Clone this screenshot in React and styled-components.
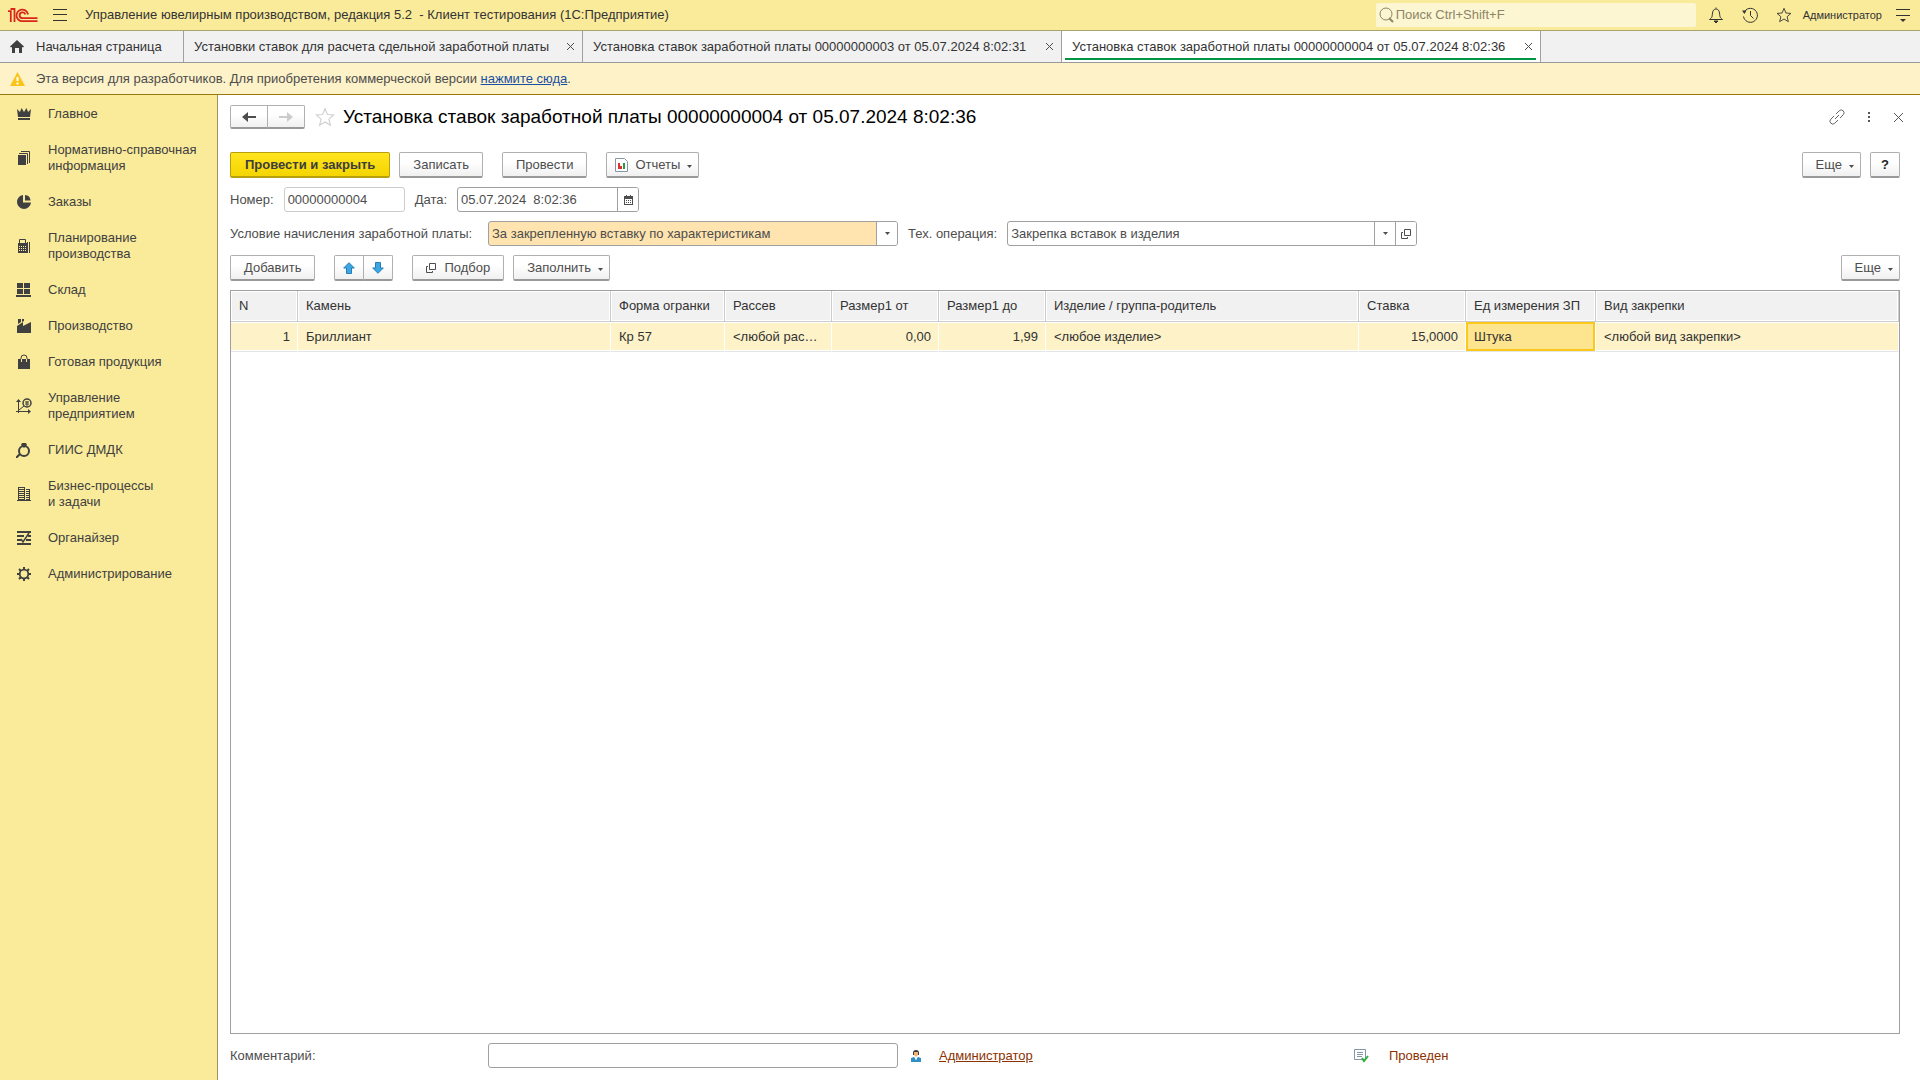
import { useState } from "react";
import styled, { createGlobalStyle, css } from "styled-components";

const GlobalStyle = createGlobalStyle`
  * { box-sizing: border-box; }

  body {
    margin: 0;
    background: #fff;
    color: #4d4d4d;
    font-family: "Liberation Sans", Arial, sans-serif;
    font-size: 13px;
    line-height: 16px;
  }

  button, input, select {
    font: inherit;
    color: inherit;
  }
`;

const sections = [
  { title: "Главное", icon: "crown" },
  { title: "Нормативно-справочная\nинформация", icon: "pages" },
  { title: "Заказы", icon: "pie" },
  { title: "Планирование\nпроизводства", icon: "calc" },
  { title: "Склад", icon: "boxes" },
  { title: "Производство", icon: "factory" },
  { title: "Готовая продукция", icon: "bag" },
  { title: "Управление\nпредприятием", icon: "axes" },
  { title: "ГИИС ДМДК", icon: "ring" },
  { title: "Бизнес-процессы\nи задачи", icon: "building" },
  { title: "Органайзер", icon: "organizer" },
  { title: "Администрирование", icon: "gear" },
];

const tabs = [
  { title: "Установки ставок для расчета сдельной заработной платы", width: 399 },
  { title: "Установка ставок заработной платы 00000000003 от 05.07.2024 8:02:31", width: 479 },
  { title: "Установка ставок заработной платы 00000000004 от 05.07.2024 8:02:36", width: 479 },
];

const columns = [
  { key: "n", title: "N", width: 67, right: true },
  { key: "stone", title: "Камень", width: 313 },
  { key: "shape", title: "Форма огранки", width: 114 },
  { key: "sieve", title: "Рассев", width: 107 },
  { key: "sizeFrom", title: "Размер1 от", width: 107, right: true },
  { key: "sizeTo", title: "Размер1 до", width: 107, right: true },
  { key: "product", title: "Изделие / группа-родитель", width: 313 },
  { key: "rate", title: "Ставка", width: 107, right: true },
  { key: "unit", title: "Ед измерения ЗП", width: 130 },
  { key: "setting", title: "Вид закрепки" },
];

const rows = [
  {
    n: "1",
    stone: "Бриллиант",
    shape: "Кр 57",
    sieve: "<любой рассев>",
    sizeFrom: "0,00",
    sizeTo: "1,99",
    product: "<любое изделие>",
    rate: "15,0000",
    unit: "Штука",
    setting: "<любой вид закрепки>",
  },
];

const sectionIcons = {
  crown: (
    <>
      <path d="M1 3l3 3 1.500-4L8 6l2.500-4L12 6l3-3-1 8H2z" />
      <path d="M2 12h12v2H2z" />
    </>
  ),
  pages: (
    <>
      <path d="M2 5h8v10H2z" />
      <path d="M3 3.500h8.500V14M5 1.500h8.500V13" fill="none" stroke="currentColor" />
    </>
  ),
  pie: (
    <>
      <path d="M7 1v7.500h8A7 7 0 1 1 7 1z" />
      <path d="M9 1a6 6 0 0 1 5.500 5.500H9z" />
    </>
  ),
  calc: (
    <>
      <path d="M3.500 6V1.500h6V6M13.500 4v11" fill="none" stroke="currentColor" />
      <path d="M2 5h9v10H2z" />
      <path d="M11.500 4v11" stroke="currentColor" />
      <path d="M3 8h1v1H3zM5 8h1v1H5zM7 8h1v1H7zM9 8h1v1H9zM3 10h1v1H3zM5 10h1v1H5zM7 10h1v1H7zM9 10h1v1H9zM3 12h1v1H3zM5 12h1v1H5zM7 12h1v1H7zM9 12h1v1H9z" fill="#faeb9b" />
    </>
  ),
  boxes: <path d="M1 1h6v5H1zM8 1h6v5H8zM1 7h6v5H1zM8 7h6v5H8zM0 13h15v2H0z" />,
  factory: <path d="M2 1h3v3l-3 2zM6 1h2v2L6 4zM1 8l6-4v4l8-4v11H1z" />,
  bag: (
    <>
      <path d="M2 5h12v10H2z" />
      <path d="M5 8V4a3 3 0 0 1 6 0v4" fill="none" stroke="currentColor" />
      <path d="M5.500 5v3M10.500 5v3" stroke="#faeb9b" />
    </>
  ),
  axes: (
    <>
      <path d="M2.500 15V2M0 13.500h14M3 12l5-4" fill="none" stroke="currentColor" />
      <path d="M0 4l2.500-3L5 4zM12 11l3 2.500-3 2.500z" />
      <circle cx="11" cy="5" r="4" fill="none" stroke="currentColor" strokeWidth="1.500" />
      <path d="M9 4h4M9 6h4M11 3v5" stroke="currentColor" />
    </>
  ),
  ring: (
    <>
      <circle cx="8" cy="9" r="5" fill="none" stroke="currentColor" strokeWidth="2" />
      <path d="M6 1h4l1 2-3 3-3-3z" />
      <path d="M4 12l-4 4" stroke="currentColor" strokeWidth="2" />
    </>
  ),
  building: (
    <>
      <path d="M2 1h7v13H2zM10 3h4v11h-4zM1 14h14v1H1z" />
      <path d="M3 2.500h5M3 4.500h5M3 6.500h5M3 8.500h5M3 10.500h5M3 12.500h5M10 4.500h3M10 6.500h3M10 8.500h3M10 10.500h3M10 12.500h3" stroke="#faeb9b" />
    </>
  ),
  organizer: (
    <>
      <path d="M1 1h14v2H1zM1 5h7v2H1zM12 5h3v2h-3zM1 9h4v2H1zM10 9h5v2h-5zM1 13h14v2H1z" />
      <path d="M5 9l2 3 6-9" fill="none" stroke="currentColor" strokeWidth="1.500" />
    </>
  ),
  gear: (
    <>
      <circle cx="8" cy="8" r="4.300" fill="none" stroke="currentColor" strokeWidth="1.800" />
      <path d="M8 1v3M8 12v3M1 8h3M12 8h3M3 3l2 2M11 11l2 2M13 3l-2 2M5 11l-2 2" stroke="currentColor" strokeWidth="2" />
    </>
  ),
};

const Caret = () => (
  <svg width="5" height="3" viewBox="0 0 5 3" aria-hidden="true">
    <path d="M0 0h5L2.500 3z" fill="#4d4d4d" />
  </svg>
);

const OpenIcon = () => (
  <svg width="10" height="10" viewBox="0 0 10 10" fill="none" stroke="#4d4d4d" aria-hidden="true">
    <path d="M3.500.5h6v6h-6z" />
    <path d="M2 3.500H.5v6h6V8" />
  </svg>
);

const StarIcon = ({ size, color, width = 1 }) => (
  <svg width={size} height={size} viewBox="0 0 18 18" fill="none" stroke={color} strokeWidth={width} aria-hidden="true">
    <path d="M9 1.500l2.200 5.300 5.600.4-4.300 3.700 1.400 5.600L9 13.500l-4.900 3 1.400-5.600L1.200 7.200l5.600-.4z" />
  </svg>
);

export default function App() {
  const [activeTab, setActiveTab] = useState(2);
  const [comment, setComment] = useState("");

  return (
    <Page>
      <GlobalStyle />

      <TopBar>
        <Logo viewBox="0 0 30 15" aria-label="1С">
          <path d="M0 3.200h2.800V14M2.500 1h4V14" />
          <path d="M20 6.500A5.800 5.800 0 1 0 14.500 13.200H29.500M17.300 6.500A2.900 2.900 0 1 0 14.500 10.200H29.500" />
        </Logo>
        <IconButton aria-label="Главное меню">
          <svg width="14" height="12" viewBox="0 0 14 12" stroke="#333" aria-hidden="true">
            <path d="M0 .5h14M0 5.500h14M0 11.500h14" />
          </svg>
        </IconButton>
        <AppTitle>Управление ювелирным производством, редакция 5.2&nbsp; - Клиент тестирования (1С:Предприятие)</AppTitle>
        <Search>
          <svg width="15" height="16" viewBox="0 0 15 16" fill="none" stroke="#8c8566" aria-hidden="true">
            <circle cx="7" cy="7" r="6" />
            <path d="M10 11l4 4" strokeWidth="2" />
          </svg>
          <input type="search" placeholder="Поиск Ctrl+Shift+F" aria-label="Поиск" />
        </Search>
        <TopActions>
          <IconButton aria-label="Уведомления">
            <svg width="16" height="16" viewBox="0 0 16 16" fill="none" stroke="#333" aria-hidden="true">
              <path d="M8 .5v1M1.500 12.500c3-2 2.500-3 3-6.500.3-2.500 1.500-4 3.500-4s3.200 1.500 3.500 4c.5 3.500 0 4.500 3 6.500z" />
              <path d="M6 14h4l-2 2z" fill="#333" />
            </svg>
          </IconButton>
          <IconButton aria-label="История">
            <svg width="16" height="16" viewBox="0 0 16 16" fill="none" stroke="#333" aria-hidden="true">
              <path d="M2 5.500a7 7 0 1 1-.5 4M8.500 4v4.500l3 3" />
              <path d="M0 3.500h4.500L2.500 7z" fill="#333" stroke="none" />
            </svg>
          </IconButton>
          <IconButton aria-label="Избранное">
            <StarIcon size={16} color="#333" />
          </IconButton>
        </TopActions>
        <UserName>Администратор</UserName>
        <IconButton aria-label="Настройки">
          <svg width="14" height="13" viewBox="0 0 14 13" aria-hidden="true">
            <path d="M0 .5h14M0 6.500h14" stroke="#333" />
            <path d="M4 10h6l-3 3z" fill="#333" />
          </svg>
        </IconButton>
      </TopBar>

      <TabBar>
        <Tab $width={184}>
          <TabButton>
            <svg width="14" height="13" viewBox="0 0 14 13" fill="#404040" aria-hidden="true">
              <path d="M7 0l7 6.500-1 1L12 7v6H9V8H5v5H2V7L1 7.500l-1-1z" />
            </svg>
            Начальная страница
          </TabButton>
        </Tab>
        {tabs.map((tab, index) => (
          <Tab key={tab.title} $width={tab.width} $active={index === activeTab}>
            <TabButton onClick={() => setActiveTab(index)}>{tab.title}</TabButton>
            <TabClose aria-label="Закрыть вкладку">
              <svg width="7" height="7" viewBox="0 0 7 7" stroke="#4d4d4d" aria-hidden="true">
                <path d="M0 0l7 7M7 0L0 7" />
              </svg>
            </TabClose>
          </Tab>
        ))}
      </TabBar>

      <Notice>
        <svg width="15" height="14" viewBox="0 0 15 14" aria-hidden="true">
          <path d="M7.500 0L15 14H0z" fill="#fcc419" />
          <path d="M7.500 5v4M7.500 10.500v2" stroke="#fff" strokeWidth="2" />
        </svg>
        <span>
          Эта версия для разработчиков. Для приобретения коммерческой версии <a href="#buy">нажмите сюда</a>.
        </span>
      </Notice>

      <Body>
        <Sidebar>
          {sections.map((section) => (
            <SectionLink key={section.title} href="#section">
              <svg width="16" height="16" viewBox="0 0 16 16" fill="currentColor" aria-hidden="true">
                {sectionIcons[section.icon]}
              </svg>
              <span>{section.title}</span>
            </SectionLink>
          ))}
        </Sidebar>

        <Form>
          <FormHeader>
            <ButtonGroup>
              <NavButton aria-label="Назад">
                <svg width="14" height="10" viewBox="0 0 14 10" aria-hidden="true">
                  <path d="M14 4v2H6v4L0 5l6-5v4z" fill="#4d4d4d" />
                </svg>
              </NavButton>
              <NavButton aria-label="Вперед" disabled>
                <svg width="14" height="10" viewBox="0 0 14 10" aria-hidden="true">
                  <path d="M0 4v2h8v4l6-5-6-5v4z" fill="#ccc" />
                </svg>
              </NavButton>
            </ButtonGroup>
            <IconButton aria-label="В избранное">
              <StarIcon size={20} color="#d0d0d0" />
            </IconButton>
            <FormTitle>Установка ставок заработной платы 00000000004 от 05.07.2024 8:02:36</FormTitle>
            <HeaderActions>
              <IconButton aria-label="Получить ссылку">
                <svg width="16" height="16" viewBox="0 0 16 16" fill="none" stroke="#666" aria-hidden="true">
                  <path d="M7 5l3.200-3.200a2.800 2.800 0 0 1 4 4L11 9" />
                  <path d="M9 11l-3.200 3.200a2.800 2.800 0 0 1-4-4L5 7" />
                  <path d="M6 10l4-4" />
                </svg>
              </IconButton>
              <IconButton aria-label="Меню формы">
                <svg width="2" height="10" viewBox="0 0 2 10" fill="#555" aria-hidden="true">
                  <path d="M0 0h2v2H0zM0 4h2v2H0zM0 8h2v2H0z" />
                </svg>
              </IconButton>
              <IconButton aria-label="Закрыть">
                <svg width="11" height="11" viewBox="0 0 11 11" stroke="#555" aria-hidden="true">
                  <path d="M1 1l9 9M10 1l-9 9" />
                </svg>
              </IconButton>
            </HeaderActions>
          </FormHeader>

          <Commands>
            <Button $primary>Провести и закрыть</Button>
            <Button>Записать</Button>
            <Spacer />
            <Button>Провести</Button>
            <Spacer />
            <Button $compact>
              <svg width="13" height="14" viewBox="0 0 13 14" aria-hidden="true">
                <path d="M.5.5h9l3 3v10H.5z" fill="#fff" stroke="#8796a5" />
                <path d="M3 5h2v6H3z" fill="#e03131" />
                <path d="M5 8h2v3H5z" fill="#e03131" />
                <path d="M8 5h2v6H8z" fill="#2b9a3e" />
              </svg>
              Отчеты
              <MenuMark>
                <Caret />
              </MenuMark>
            </Button>
            <Push />
            <Button $menu>
              Еще
              <MenuMark>
                <Caret />
              </MenuMark>
            </Button>
            <Button $help>?</Button>
          </Commands>

          <FieldRow>
            <Label htmlFor="number">Номер:</Label>
            <Field $width={121} $muted>
              <input id="number" defaultValue="00000000004" />
            </Field>
            <Label htmlFor="date">Дата:</Label>
            <Field $width={182}>
              <input id="date" defaultValue="05.07.2024  8:02:36" />
              <FieldButton aria-label="Выбрать дату">
                <svg width="9" height="10" viewBox="0 0 9 10" aria-hidden="true">
                  <path d="M0 1h9v9H0z" fill="#4d4d4d" />
                  <path d="M2 0h1v2H2zM6 0h1v2H6z" fill="#4d4d4d" />
                  <path d="M1 4h7v5H1z" fill="#fff" />
                  <path d="M2 5h1v1H2zM4 5h1v1H4zM6 5h1v1H6zM2 7h1v1H2zM4 7h1v1H4zM6 7h1v1H6z" fill="#4d4d4d" />
                </svg>
              </FieldButton>
            </Field>
          </FieldRow>

          <FieldRow>
            <Label htmlFor="condition" $wide>Условие начисления заработной платы:</Label>
            <Field $width={410} $highlight>
              <select id="condition">
                <option>За закрепленную вставку по характеристикам</option>
              </select>
              <SelectMark>
                <Caret />
              </SelectMark>
            </Field>
            <Label htmlFor="operation">Тех. операция:</Label>
            <Field $width={410}>
              <select id="operation">
                <option>Закрепка вставок в изделия</option>
              </select>
              <SelectMark>
                <Caret />
              </SelectMark>
              <FieldButton aria-label="Открыть">
                <OpenIcon />
              </FieldButton>
            </Field>
          </FieldRow>

          <Commands>
            <Button>Добавить</Button>
            <Spacer />
            <ButtonGroup>
              <MoveButton aria-label="Переместить вверх">
                <svg width="12" height="12" viewBox="0 0 12 12" aria-hidden="true">
                  <path d="M6 .7L11.300 6H8.500v5.500h-5V6H.7z" fill="#3ba7e5" stroke="#2b7cb3" />
                </svg>
              </MoveButton>
              <MoveButton aria-label="Переместить вниз">
                <svg width="12" height="12" viewBox="0 0 12 12" aria-hidden="true">
                  <path d="M6 11.300L.7 6h2.800V.5h5V6h2.800z" fill="#3ba7e5" stroke="#2b7cb3" />
                </svg>
              </MoveButton>
            </ButtonGroup>
            <Spacer />
            <Button>
              <OpenIcon />
              Подбор
            </Button>
            <Button $menu>
              Заполнить
              <MenuMark>
                <Caret />
              </MenuMark>
            </Button>
            <Push />
            <Button $menu>
              Еще
              <MenuMark>
                <Caret />
              </MenuMark>
            </Button>
          </Commands>

          <TablePane>
            <Table>
              <colgroup>
                {columns.map((column) => (
                  <col key={column.key} width={column.width} />
                ))}
              </colgroup>
              <thead>
                <tr>
                  {columns.map((column) => (
                    <HeadCell key={column.key}>{column.title}</HeadCell>
                  ))}
                </tr>
              </thead>
              <tbody>
                {rows.map((row) => (
                  <tr key={row.n}>
                    {columns.map((column) => (
                      <Cell key={column.key} $right={column.right} $current={column.key === "unit"}>
                        {row[column.key]}
                      </Cell>
                    ))}
                  </tr>
                ))}
              </tbody>
            </Table>
          </TablePane>

          <Footer>
            <Label htmlFor="comment" $wide>Комментарий:</Label>
            <Field $width={410}>
              <input id="comment" value={comment} onChange={(e) => setComment(e.target.value)} />
            </Field>
            <Author>
              <svg width="10" height="13" viewBox="0 0 10 13" aria-hidden="true">
                <path d="M2 4a3 3 0 0 1 6 0v2H2z" fill="#3b3b3b" />
                <path d="M3 3h4v3L5 8 3 6z" fill="#f2b56b" />
                <path d="M0 13V9l3-1 2 2 2-2 3 1v4z" fill="#2f8fc7" />
                <path d="M4 8h2v2L5 11 4 10z" fill="#fff" />
              </svg>
              <a href="#author">Администратор</a>
            </Author>
            <Status>
              <svg width="15" height="14" viewBox="0 0 15 14" fill="none" aria-hidden="true">
                <path d="M.5.5h11v10H.5z" fill="#fff" stroke="#8796a5" />
                <path d="M3 3.500h6M3 5.500h6M3 7.500h5" stroke="#8796a5" />
                <path d="M8 9l2 3 4-5" stroke="#2fae3f" strokeWidth="2" />
              </svg>
              Проведен
            </Status>
          </Footer>
        </Form>
      </Body>
    </Page>
  );
}

const Page = styled.div`
  display: flex;
  flex-direction: column;
  min-height: 100vh;
`;

const TopBar = styled.header`
  display: flex;
  align-items: center;
  height: 31px;
  padding: 0 10px 0 8px;
  background: #faeb9b;
  border-bottom: 1px solid #a9a36c;
  color: #333;
`;

const Logo = styled.svg`
  width: 30px;
  height: 15px;
  margin-right: 15px;
  fill: none;
  stroke: #d9261c;
  stroke-width: 1.8;
`;

const IconButton = styled.button`
  display: flex;
  align-items: center;
  justify-content: center;
  padding: 0;
  border: 0;
  background: none;
  cursor: pointer;
`;

const AppTitle = styled.div`
  flex: 1;
  margin-left: 18px;
  white-space: nowrap;
`;

const Search = styled.label`
  display: flex;
  align-items: center;
  gap: 2px;
  width: 320px;
  height: 24px;
  padding: 0 3px;
  background: #fdf6d3;
  border-radius: 2px;

  input {
    flex: 1;
    min-width: 0;
    padding: 0;
    border: 0;
    outline: 0;
    background: none;
  }

  input::placeholder {
    color: #8c8566;
  }
`;

const TopActions = styled.div`
  display: flex;
  gap: 18px;
  margin: 0 11px 0 12px;
`;

const UserName = styled.span`
  margin-right: 14px;
  font-size: 11px;
`;

const TabBar = styled.nav`
  display: flex;
  height: 32px;
  background: #f1f1f1;
  border-bottom: 1px solid #999;
`;

const Tab = styled.div`
  position: relative;
  display: flex;
  align-items: center;
  justify-content: space-between;
  min-width: ${(props) => props.$width}px;
  padding: 0 4px 0 10px;
  border-right: 1px solid #a0a0a0;
  color: #333;

  ${(props) =>
    props.$active &&
    css`
      background: #fff;

      &::after {
        content: "";
        position: absolute;
        right: 4px;
        bottom: 2px;
        left: 3px;
        height: 2px;
        background: #009646;
      }
    `}
`;

const TabButton = styled.button`
  display: flex;
  align-items: center;
  gap: 12px;
  padding: 0;
  border: 0;
  background: none;
  white-space: nowrap;
  cursor: pointer;
`;

const TabClose = styled(IconButton)`
  width: 15px;
  height: 16px;
`;

const Notice = styled.div`
  display: flex;
  align-items: center;
  gap: 11px;
  height: 32px;
  padding: 0 10px;
  background: #fdf2c8;
  border-bottom: 1px solid #96780f;

  a {
    color: #1a4fa3;
  }
`;

const Body = styled.div`
  display: flex;
  flex: 1;
`;

const Sidebar = styled.nav`
  flex: none;
  width: 218px;
  padding-top: 1px;
  background: #faeb9b;
  border-right: 1px solid #9c9564;
`;

const SectionLink = styled.a`
  display: flex;
  align-items: center;
  gap: 16px;
  padding: 10px 8px 10px 16px;
  color: #404040;
  text-decoration: none;

  span {
    white-space: pre-line;
  }
`;

const Form = styled.main`
  display: flex;
  flex: 1;
  flex-direction: column;
  min-width: 0;
  padding: 10px 20px 12px 12px;
`;

const FormHeader = styled.div`
  display: flex;
  align-items: center;
  height: 24px;
  margin-bottom: 23px;
`;

const FormTitle = styled.h1`
  flex: 1;
  margin: 0 0 0 8px;
  color: #000;
  font-size: 19px;
  font-weight: normal;
  line-height: 24px;
`;

const HeaderActions = styled.div`
  display: flex;
  align-items: center;
  gap: 23px;
  margin-right: -4px;
`;

const ButtonGroup = styled.div`
  display: flex;

  button:first-child {
    border-radius: 2px 0 0 2px;
  }

  button:last-child {
    margin-left: -1px;
    border-radius: 0 2px 2px 0;
  }

  & + ${IconButton} {
    margin-left: 10px;
  }
`;

const Button = styled.button`
  display: flex;
  align-items: center;
  justify-content: center;
  gap: 8px;
  height: 26px;
  padding: 0 13px;
  background: linear-gradient(#fff 40%, #f0f0f0);
  border: 1px solid #b0b0b0;
  border-bottom: 2px solid #999;
  border-radius: 2px;
  white-space: nowrap;
  cursor: pointer;

  ${(props) =>
    props.$primary &&
    css`
      padding: 0 14px;
      background: linear-gradient(#ffe51f, #f5d500);
      border-color: #b89f0c;
      color: #3d3d3d;
      font-weight: bold;
    `}

  ${(props) =>
    props.$compact &&
    css`
      gap: 7px;
      padding: 0 6px 0 8px;
    `}

  ${(props) =>
    props.$menu &&
    css`
      gap: 7px;
      padding: 0 6px 0 13px;
    `}

  ${(props) =>
    props.$help &&
    css`
      width: 30px;
      padding: 0;
      color: #222;
      font-weight: bold;
    `}
`;

const MenuMark = styled.span`
  display: flex;
  padding-top: 3px;
`;

const NavButton = styled(Button)`
  width: 38px;
  height: 24px;
  padding: 0;
`;

const MoveButton = styled(Button)`
  width: 30px;
  padding: 0;
`;

const Commands = styled.div`
  display: flex;
  gap: 9px;
  margin-bottom: 9px;
`;

const Spacer = styled.span`
  width: 1px;
`;

const Push = styled.span`
  flex: 1;
`;

const FieldRow = styled.div`
  display: flex;
  align-items: center;
  gap: 10px;
  margin-bottom: 9px;
`;

const Label = styled.label`
  flex: none;
  width: ${(props) => (props.$wide ? "248px" : "auto")};
  white-space: nowrap;
`;

const Field = styled.div`
  display: flex;
  width: ${(props) => props.$width}px;
  height: 25px;
  overflow: hidden;
  background: ${(props) => (props.$highlight ? "#ffe4b0" : "#fff")};
  border: 1px solid ${(props) => (props.$muted ? "#ccc" : "#a0a0a0")};
  border-radius: 3px;

  input,
  select {
    flex: 1;
    min-width: 0;
    padding: 0 3px;
    border: 0;
    outline: 0;
    background: none;
    appearance: none;
    white-space: pre;
  }
`;

const FieldButton = styled.button`
  display: flex;
  align-items: center;
  justify-content: center;
  width: 21px;
  padding: 0;
  background: #fff;
  border: 0;
  border-left: 1px solid #a0a0a0;
  cursor: pointer;
`;

const SelectMark = styled.span`
  display: flex;
  align-items: center;
  justify-content: center;
  width: 21px;
  background: #fff;
  border-left: 1px solid #a0a0a0;
  pointer-events: none;
`;

const TablePane = styled.div`
  flex: 1;
  min-height: 200px;
  border: 1px solid #a0a0a0;
`;

const Table = styled.table`
  width: 100%;
  table-layout: fixed;
  border-collapse: separate;
  border-spacing: 0;
  color: #333;
`;

const HeadCell = styled.th`
  height: 31px;
  padding: 0 7px 0 8px;
  background: #f1f1f1;
  border-right: 1px solid #ccc;
  border-bottom: 1px solid #ccc;
  box-shadow: inset 0 0 0 1px #fff;
  font-weight: normal;
  text-align: left;
  white-space: nowrap;
`;

const Cell = styled.td`
  height: 30px;
  padding: 0 ${(props) => (props.$right ? 7 : 12)}px 0 8px;
  overflow: hidden;
  background: #fdf2c8;
  border-right: 1px solid #fff;
  border-bottom: 1px solid #e5e5e5;
  box-shadow: inset 0 1px #fff, inset 0 -1px #fff;
  text-align: ${(props) => (props.$right ? "right" : "left")};
  text-overflow: ellipsis;
  white-space: nowrap;

  ${(props) =>
    props.$current &&
    css`
      background: #fde48f;
      box-shadow: inset 0 0 0 2px #fcc81e;
    `}
`;

const Footer = styled.div`
  display: flex;
  align-items: center;
  gap: 10px;
  margin-top: 9px;
`;

const Author = styled.div`
  display: flex;
  align-items: center;
  gap: 18px;
  width: 436px;
  padding-left: 3px;

  a {
    color: #8c3200;
  }
`;

const Status = styled.div`
  display: flex;
  align-items: center;
  gap: 20px;
  color: #8c3200;
`;
